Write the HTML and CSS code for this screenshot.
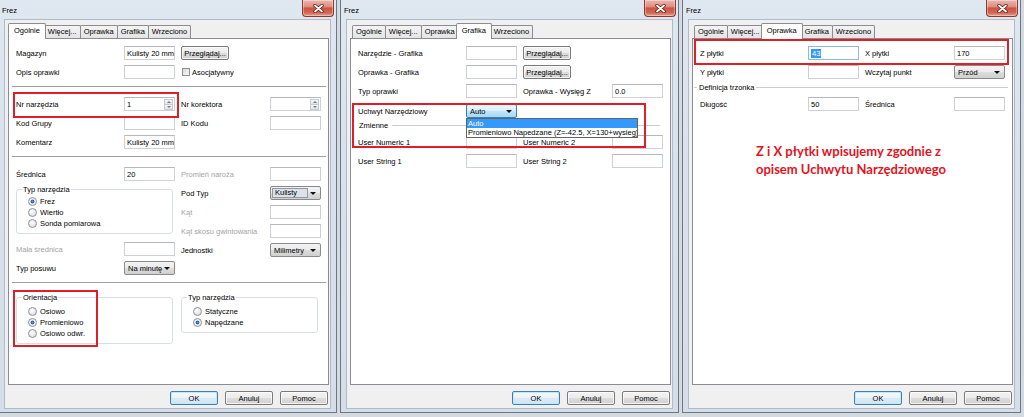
FILE: index.html
```html
<!DOCTYPE html>
<html lang="pl">
<head>
    <meta charset="UTF-8">
    <meta name="viewport" content="width=device-width, initial-scale=1.0">
    <title>Frez</title>
    <link rel="stylesheet" href="styles.css">
</head>
<body>
    <!-- Okno 1: Ogólnie -->
    <div class="win first">
        <div class="titlebar">
            <span class="title">Frez</span>
            <span class="close"><svg width="11" height="9" viewBox="0 0 11 9"><path d="M2 1.5 L9 7.5 M9 1.5 L2 7.5" stroke="#5a1c16" stroke-width="3.4" stroke-linecap="round"/><path d="M2 1.5 L9 7.5 M9 1.5 L2 7.5" stroke="#fff" stroke-width="1.8" stroke-linecap="round"/></svg></span>
        </div>
        <div class="client">
            <div class="tabs">
                <span class="tab active">Ogólnie</span>
                <span class="tab">Więcej...</span>
                <span class="tab">Oprawka</span>
                <span class="tab">Grafika</span>
                <span class="tab">Wrzeciono</span>
            </div>
            <div class="panel">
                <div class="row">
                    <span>Magazyn</span>
                    <span class="field">Kulisty 20 mm</span>
                    <button class="btn">Przeglądaj...</button>
                </div>
                <div class="row">
                    <span>Opis oprawki</span>
                    <span class="field"></span>
                    <span class="check"><span class="box"></span>Asocjatywny</span>
                </div>
                <div class="sep"></div>
                <div class="row">
                    <span>Nr narzędzia</span>
                    <span class="field spin">1<span class="spinner"><i class="up"></i><i class="down"></i></span></span>
                    <span>Nr korektora</span>
                    <span class="field spin"><span class="spinner"><i class="up"></i><i class="down"></i></span></span>
                </div>
                <div class="row">
                    <span>Kod Grupy</span>
                    <span class="field"></span>
                    <span>ID Kodu</span>
                    <span class="field"></span>
                </div>
                <div class="row">
                    <span>Komentarz</span>
                    <span class="field">Kulisty 20 mm</span>
                </div>
                <div class="sep"></div>
                <div class="cols">
                    <div class="col">
                        <div class="row">
                            <span>Średnica</span>
                            <span class="field">20</span>
                        </div>
                        <fieldset class="group tight">
                            <legend>Typ narzędzia</legend>
                            <div class="radio on">Frez</div>
                            <div class="radio">Wiertło</div>
                            <div class="radio">Sonda pomiarowa</div>
                        </fieldset>
                        <div class="row after-group">
                            <span class="dim">Mała średnica</span>
                            <span class="field"></span>
                        </div>
                        <div class="row">
                            <span>Typ posuwu</span>
                            <span class="combo">Na minutę</span>
                        </div>
                    </div>
                    <div class="col">
                        <div class="row">
                            <span class="dim">Promień naroża</span>
                            <span class="field"></span>
                        </div>
                        <div class="row">
                            <span>Pod Typ</span>
                            <span class="combo"><span class="sel">Kulisty</span></span>
                        </div>
                        <div class="row">
                            <span class="dim">Kąt</span>
                            <span class="field"></span>
                        </div>
                        <div class="row">
                            <span class="dim">Kąt skosu gwintowania</span>
                            <span class="field"></span>
                        </div>
                        <div class="row">
                            <span>Jednostki</span>
                            <span class="combo">Milimetry</span>
                        </div>
                    </div>
                </div>
                <div class="sep"></div>
                <div class="cols groups">
                    <fieldset class="group wide">
                        <legend>Orientacja</legend>
                        <div class="radio">Osiowo</div>
                        <div class="radio on">Promieniowo</div>
                        <div class="radio">Osiowo odwr.</div>
                    </fieldset>
                    <fieldset class="group narrow">
                        <legend>Typ narzędzia</legend>
                        <div class="radio">Statyczne</div>
                        <div class="radio on">Napędzane</div>
                    </fieldset>
                </div>
                <div class="mark mark-nr"></div>
                <div class="mark mark-orient"></div>
            </div>
            <div class="btns">
                <button class="btn default">OK</button>
                <button class="btn">Anuluj</button>
                <button class="btn">Pomoc</button>
            </div>
        </div>
    </div>

    <!-- Okno 2: Grafika -->
    <div class="win">
        <div class="titlebar">
            <span class="title">Frez</span>
            <span class="close"><svg width="11" height="9" viewBox="0 0 11 9"><path d="M2 1.5 L9 7.5 M9 1.5 L2 7.5" stroke="#5a1c16" stroke-width="3.4" stroke-linecap="round"/><path d="M2 1.5 L9 7.5 M9 1.5 L2 7.5" stroke="#fff" stroke-width="1.8" stroke-linecap="round"/></svg></span>
        </div>
        <div class="client">
            <div class="tabs">
                <span class="tab">Ogólnie</span>
                <span class="tab">Więcej...</span>
                <span class="tab">Oprawka</span>
                <span class="tab active">Grafika</span>
                <span class="tab">Wrzeciono</span>
            </div>
            <div class="panel">
                <div class="row">
                    <span>Narzędzie - Grafika</span>
                    <span class="field"></span>
                    <button class="btn">Przeglądaj...</button>
                </div>
                <div class="row">
                    <span>Oprawka - Grafika</span>
                    <span class="field"></span>
                    <button class="btn">Przeglądaj...</button>
                </div>
                <div class="row">
                    <span>Typ oprawki</span>
                    <span class="field"></span>
                    <span>Oprawka - Wysięg Z</span>
                    <span class="field">0.0</span>
                </div>
                <div class="row uchwyt">
                    <span>Uchwyt Narzędziowy</span>
                    <span class="combo hot">Auto
                        <span class="dropdown">
                            <span class="opt picked">Auto</span>
                            <span class="opt">Promieniowo Napedzane (Z=-42.5, X=130+wysieg)</span>
                        </span>
                    </span>
                </div>
                <div class="groupline plain">Zmienne</div>
                <div class="row">
                    <span>User Numeric 1</span>
                    <span class="field"></span>
                    <span>User Numeric 2</span>
                    <span class="field"></span>
                </div>
                <div class="row">
                    <span>User String 1</span>
                    <span class="field"></span>
                    <span>User String 2</span>
                    <span class="field"></span>
                </div>
                <div class="mark mark-uchwyt"></div>
            </div>
            <div class="btns">
                <button class="btn default">OK</button>
                <button class="btn">Anuluj</button>
                <button class="btn">Pomoc</button>
            </div>
        </div>
    </div>

    <!-- Okno 3: Oprawka -->
    <div class="win">
        <div class="titlebar">
            <span class="title">Frez</span>
            <span class="close"><svg width="11" height="9" viewBox="0 0 11 9"><path d="M2 1.5 L9 7.5 M9 1.5 L2 7.5" stroke="#5a1c16" stroke-width="3.4" stroke-linecap="round"/><path d="M2 1.5 L9 7.5 M9 1.5 L2 7.5" stroke="#fff" stroke-width="1.8" stroke-linecap="round"/></svg></span>
        </div>
        <div class="client">
            <div class="tabs">
                <span class="tab">Ogólnie</span>
                <span class="tab">Więcej...</span>
                <span class="tab active">Oprawka</span>
                <span class="tab">Grafika</span>
                <span class="tab">Wrzeciono</span>
            </div>
            <div class="panel">
                <div class="row">
                    <span>Z płytki</span>
                    <span class="field focus"><span class="hl">43</span></span>
                    <span>X płytki</span>
                    <span class="field">170</span>
                </div>
                <div class="row">
                    <span>Y płytki</span>
                    <span class="field"></span>
                    <span>Wczytaj punkt</span>
                    <span class="combo">Przód</span>
                </div>
                <div class="groupline">Definicja trzonka</div>
                <div class="row">
                    <span>Długość</span>
                    <span class="field">50</span>
                    <span>Średnica</span>
                    <span class="field"></span>
                </div>
                <p class="note">Z i X płytki wpisujemy zgodnie z<br>opisem Uchwytu Narzędziowego</p>
                <div class="mark mark-plytki"></div>
            </div>
            <div class="btns">
                <button class="btn default">OK</button>
                <button class="btn">Anuluj</button>
                <button class="btn">Pomoc</button>
            </div>
        </div>
    </div>
</body>
</html>
```

FILE: styles.css
```css
* {
    box-sizing: border-box;
}
body {
    margin: 0;
    height: 417px;
    overflow: hidden;
    display: flex;
    gap: 3px;
    background: #d5dae0;
    font-family: "Liberation Sans", Arial, sans-serif;
    font-size: 7.5px;
    color: #000;
}
.win {
    flex: none;
    width: 339px;
    height: 413px;
    display: flex;
    flex-direction: column;
    padding: 0 5px 3px;
    background: linear-gradient(#dfe7f0, #d9e2ec 40%, #d5dee8);
    border: 1px solid #6c7785;
    border-top: 0;
}
.win.first {
    margin-left: -2px;
}
.titlebar {
    height: 19px;
    flex: none;
    display: flex;
    align-items: flex-start;
    justify-content: space-between;
}
.title {
    margin-top: 6px;
    margin-left: -2px;
    line-height: 9px;
}
.close {
    width: 32px;
    height: 17px;
    margin-right: -3px;
    display: flex;
    align-items: center;
    justify-content: center;
    border: 1px solid #8a3a31;
    border-top: 0;
    border-radius: 0 0 4px 4px;
    background: linear-gradient(#ecb8b0, #dd8d7e 42%, #cb5341 50%, #d26552 78%, #e79d8c);
    box-shadow: inset 0 0 0 1px rgba(255, 255, 255, 0.35);
}
.client {
    flex: 1;
    display: flex;
    flex-direction: column;
    background: #f0f0f0;
    border: 1px solid #aebbc9;
    padding: 3px 1px 3px 3px;
}
.tabs {
    height: 15px;
    flex: none;
    display: flex;
    align-items: flex-end;
    padding-left: 2px;
    position: relative;
    z-index: 1;
}
.tab {
    height: 13px;
    line-height: 11px;
    padding: 0 3px;
    margin-right: -1px;
    border: 1px solid #898c95;
    border-bottom: 0;
    border-radius: 2px 2px 0 0;
    background: linear-gradient(#f4f4f4, #e4e4e4);
    white-space: nowrap;
}
.tab.active {
    height: 16px;
    margin: 0 -2px -1px;
    padding: 1px 5px 0;
    background: #fff;
    position: relative;
    z-index: 1;
}
.panel {
    flex: 1;
    display: flex;
    flex-direction: column;
    gap: 5px;
    background: #fff;
    border: 1px solid #898c95;
    padding: 7px 0 0 7px;
    position: relative;
}
.row {
    display: grid;
    grid-template-columns: 108px 57px 89px 51px;
    align-items: center;
    height: 14px;
    white-space: nowrap;
}
.dim {
    color: #a4a4a4;
}
.field {
    width: 51px;
    height: 14px;
    display: flex;
    align-items: center;
    padding: 0 2px;
    background: #fff;
    border: 1px solid #cdd1d6;
    border-top-color: #b4b8be;
    overflow: hidden;
    white-space: nowrap;
}
.field.focus {
    border-color: #8fb6dc;
}
.hl {
    background: #3399ff;
    color: #fff;
    padding: 0 1px;
}
.field.spin {
    padding-right: 1px;
}
.spinner {
    margin-left: auto;
    width: 9px;
    height: 11px;
    display: flex;
    flex-direction: column;
}
.spinner i {
    flex: 1;
    display: flex;
    align-items: center;
    justify-content: center;
    border: 1px solid #c6cbd2;
    background: linear-gradient(#f7f7f7, #e2e4e7);
}
.spinner i + i {
    border-top: 0;
}
.spinner i::after {
    content: '';
    border-left: 2px solid transparent;
    border-right: 2px solid transparent;
}
.spinner .up::after {
    border-bottom: 2px solid #6b7a8c;
}
.spinner .down::after {
    border-top: 2px solid #6b7a8c;
}
.btn {
    width: 48px;
    height: 14px;
    padding: 0;
    font: inherit;
    color: #000;
    border: 1px solid #7a7a7a;
    border-radius: 2px;
    background: linear-gradient(#f3f3f3, #ebebeb 50%, #dddddd 51%, #d0d0d0);
    box-shadow: inset 0 0 0 1px rgba(255, 255, 255, 0.7);
}
.btn.default {
    border-color: #3c7fb1;
    background: linear-gradient(#f5fafd, #e9f3fa 50%, #dbeaf5 51%, #d2e5f3);
    box-shadow: inset 0 0 0 1px #c6e6f8;
}
.check {
    display: flex;
    align-items: center;
    gap: 2px;
    padding-left: 1px;
}
.check .box {
    width: 8px;
    height: 8px;
    border: 1px solid #8f8f8f;
    background: linear-gradient(135deg, #d6d6d6, #fbfbfb);
}
.combo {
    width: 51px;
    height: 14px;
    display: flex;
    align-items: center;
    padding-left: 3px;
    border: 1px solid #8a8a8a;
    border-radius: 2px;
    background: linear-gradient(#f3f3f3, #ebebeb 50%, #dddddd 51%, #d0d0d0);
    position: relative;
    white-space: nowrap;
}
.combo::after {
    content: '';
    margin-left: auto;
    margin-right: 4px;
    border-left: 3px solid transparent;
    border-right: 3px solid transparent;
    border-top: 3px solid #111;
}
.combo .sel {
    width: 36px;
    height: 10px;
    line-height: 8px;
    margin-left: -2px;
    padding: 0 2px;
    background: #dde2e8;
    border: 1px solid #8f98a3;
}
.combo.hot {
    border-color: #3c7fb1;
    background: linear-gradient(#eaf6fd, #d9f0fc 50%, #bee6fd 51%, #a7d9f5);
}
.dropdown {
    position: absolute;
    left: -1px;
    top: 13px;
    width: 172px;
    background: #fff;
    border: 1px solid #646464;
    z-index: 5;
}
.opt {
    display: block;
    height: 9px;
    line-height: 9px;
    padding: 0 1px;
    white-space: nowrap;
    overflow: hidden;
}
.opt.picked {
    background: #3399ff;
    color: #fff;
}
.sep {
    flex: none;
    margin: 2px 2px 4px -4px;
    border-top: 1px solid #a0a0a0;
    border-bottom: 1px solid #fff;
}
.cols {
    display: grid;
    grid-template-columns: 165px 140px;
    align-items: start;
}
.col {
    display: flex;
    flex-direction: column;
    gap: 5px;
}
.col + .col .row {
    grid-template-columns: 89px 51px;
}
.group {
    margin: 0;
    border: 1px solid #d5dfe5;
    border-radius: 3px;
    padding: 4px 0 4px 11px;
}
.group legend {
    padding: 0 1px;
    margin-left: -6px;
    line-height: 9px;
}
.group.tight {
    width: 157px;
    margin-top: -1px;
    padding-top: 2px;
}
.group.wide {
    width: 157px;
}
.group.narrow {
    width: 137px;
}
.row.after-group {
    margin-top: 3px;
}
.radio {
    display: flex;
    align-items: center;
    gap: 3px;
    height: 11px;
}
.radio::before {
    content: '';
    width: 7px;
    height: 7px;
    border-radius: 50%;
    border: 1px solid #8e9296;
    background: radial-gradient(circle at 40% 35%, #fff, #d4d6d8);
}
.radio.on::before {
    background: radial-gradient(circle, #5d9ad6 0, #1d5c9b 1.6px, #e6e8ea 2.2px, #fff);
}
.row.uchwyt {
    margin-top: 1px;
}
.groupline {
    height: 9px;
    display: flex;
    align-items: center;
    gap: 2px;
    margin: -1px 4px 0 -6px;
    white-space: nowrap;
}
.groupline::before {
    content: '';
    width: 3px;
    border-top: 1px solid #c9cdd2;
}
.groupline::after {
    content: '';
    flex: 1;
    border-top: 1px solid #c9cdd2;
}
.groupline.plain {
    margin: -2px 10px 0 1px;
    gap: 4px;
}
.groupline.plain::before {
    display: none;
}
.note {
    margin: 26px 0 0;
    padding-left: 56px;
    font-family: Lato, "Open Sans", sans-serif;
    font-weight: 700;
    font-size: 13px;
    line-height: 18px;
    color: #e3141d;
}
.btns {
    flex: none;
    display: flex;
    justify-content: flex-end;
    gap: 7px;
    margin-top: 6px;
    padding-right: 1px;
}
.mark {
    position: absolute;
    border: 2px solid #de1f28;
    z-index: 6;
}
.mark-nr {
    left: 4px;
    top: 53px;
    width: 166px;
    height: 26px;
}
.mark-orient {
    left: 4px;
    top: 251px;
    width: 85px;
    height: 57px;
}
.mark-uchwyt {
    left: 1px;
    top: 64px;
    width: 294px;
    height: 45px;
}
.mark-plytki {
    left: 1px;
    top: 0;
    width: 315px;
    height: 26px;
}
```
